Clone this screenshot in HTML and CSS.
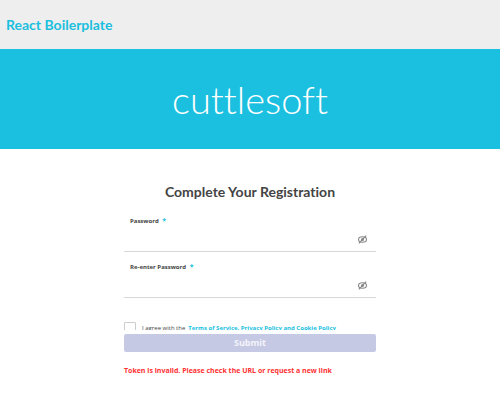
FILE: index.html
```html
<!DOCTYPE html>
<html lang="en">
<head>
<meta charset="utf-8">
<meta name="viewport" content="width=device-width, initial-scale=1">
<title>React Boilerplate</title>
<link rel="stylesheet" href="styles.css">
</head>
<body>
<header class="topbar"><a class="brand" href="#">React Boilerplate</a></header>
<div class="banner"><span class="logo">cuttlesoft</span></div>
<main class="content">
  <h1 class="title">Complete Your Registration</h1>
  <form class="form">
    <div class="field">
      <label class="label" for="password">Password <span class="required">*</span></label>
      <div class="control">
        <input class="input" id="password" type="password" required>
        <button class="toggle" type="button" aria-label="Show password">
          <svg class="eye" viewBox="0 0 10 8"><ellipse cx="5" cy="4" rx="3.6" ry="2.5"/><circle cx="5" cy="4" r=".9"/><path d="M1.7 7.6 8.3 .4"/></svg>
        </button>
      </div>
    </div>
    <div class="field">
      <label class="label" for="confirm">Re-enter Password <span class="required">*</span></label>
      <div class="control">
        <input class="input" id="confirm" type="password" required>
        <button class="toggle" type="button" aria-label="Show password">
          <svg class="eye" viewBox="0 0 10 8"><ellipse cx="5" cy="4" rx="3.6" ry="2.5"/><circle cx="5" cy="4" r=".9"/><path d="M1.7 7.6 8.3 .4"/></svg>
        </button>
      </div>
    </div>
    <div class="terms">
      <input class="checkbox" id="agree" type="checkbox">
      <label class="agree" for="agree">I agree with the</label>
      <a class="link" href="#">Terms of Service, Privacy Policy and Cookie Policy</a>
    </div>
    <button class="submit" type="submit" disabled>Submit</button>
    <p class="error" role="alert">Token is invalid. Please check the URL or request a new link</p>
  </form>
</main>
</body>
</html>
```
FILE: styles.css
```css
* { box-sizing: border-box; }
body {
  margin: 0;
  background: #fff;
  color: #444;
  font-family: "Open Sans", sans-serif;
  font-variant-ligatures: none;
}
.topbar {
  display: flex;
  align-items: center;
  padding: 16px 6px 15px;
  background: #eee;
}
.brand,
.logo,
.title {
  font-family: Lato, sans-serif;
}
.brand {
  color: #1bbfdf;
  font-size: 14px;
  font-weight: 700;
  line-height: 18px;
  text-decoration: none;
}
.banner {
  display: flex;
  justify-content: center;
  padding: 26px 0;
  background: #1bbfdf;
}
.logo {
  color: #fff;
  font-size: 38px;
  font-weight: 300;
  line-height: 48px;
}
.content {
  display: flex;
  flex-direction: column;
  align-items: center;
  padding: 34px 16px 0;
}
.title {
  margin: 0;
  font-size: 14px;
  font-weight: 700;
  line-height: 18px;
}
.form {
  display: flex;
  flex-direction: column;
  width: 100%;
  max-width: 252px;
  padding-top: 14px;
}
.field {
  display: flex;
  flex-direction: column;
  margin-bottom: 9px;
}
.label {
  padding: 0 6px;
  font-size: 6px;
  font-weight: 700;
  line-height: 12px;
}
.required {
  margin-left: 2px;
  color: #1bbfdf;
  font-size: 7px;
  line-height: 1;
}
.control {
  display: flex;
  align-items: center;
  height: 25px;
  border-bottom: 1px solid #d8d8d8;
}
.input {
  flex: 1;
  min-width: 0;
  padding: 0 6px;
  border: 0;
  outline: 0;
  background: none;
}
.toggle {
  display: flex;
  margin-right: 8px;
  padding: 0;
  border: 0;
  background: none;
}
.eye {
  width: 11px;
  height: 9px;
  fill: none;
  stroke: #888;
}
.terms {
  display: flex;
  align-items: flex-start;
  height: 8px;
  margin: 15px 0 4px;
  overflow: hidden;
  font-size: 6px;
  line-height: 12px;
}
.checkbox {
  appearance: none;
  flex: none;
  width: 12px;
  height: 12px;
  margin: 0 6px 0 0;
  border: 1px solid #ccc;
  border-radius: 1px;
}
.agree { margin-right: 3px; }
.link {
  color: #1bbfdf;
  font-weight: 700;
  text-decoration: none;
}
.submit {
  padding: 0;
  border: 0;
  border-radius: 2px;
  background: #c6c9e3;
  color: #f4f4fa;
  font: 700 9px/18px "Open Sans", sans-serif;
}
.error {
  margin: 13px 0 0;
  color: #ff3032;
  font-size: 7px;
  font-weight: 700;
  line-height: 12px;
}
```
